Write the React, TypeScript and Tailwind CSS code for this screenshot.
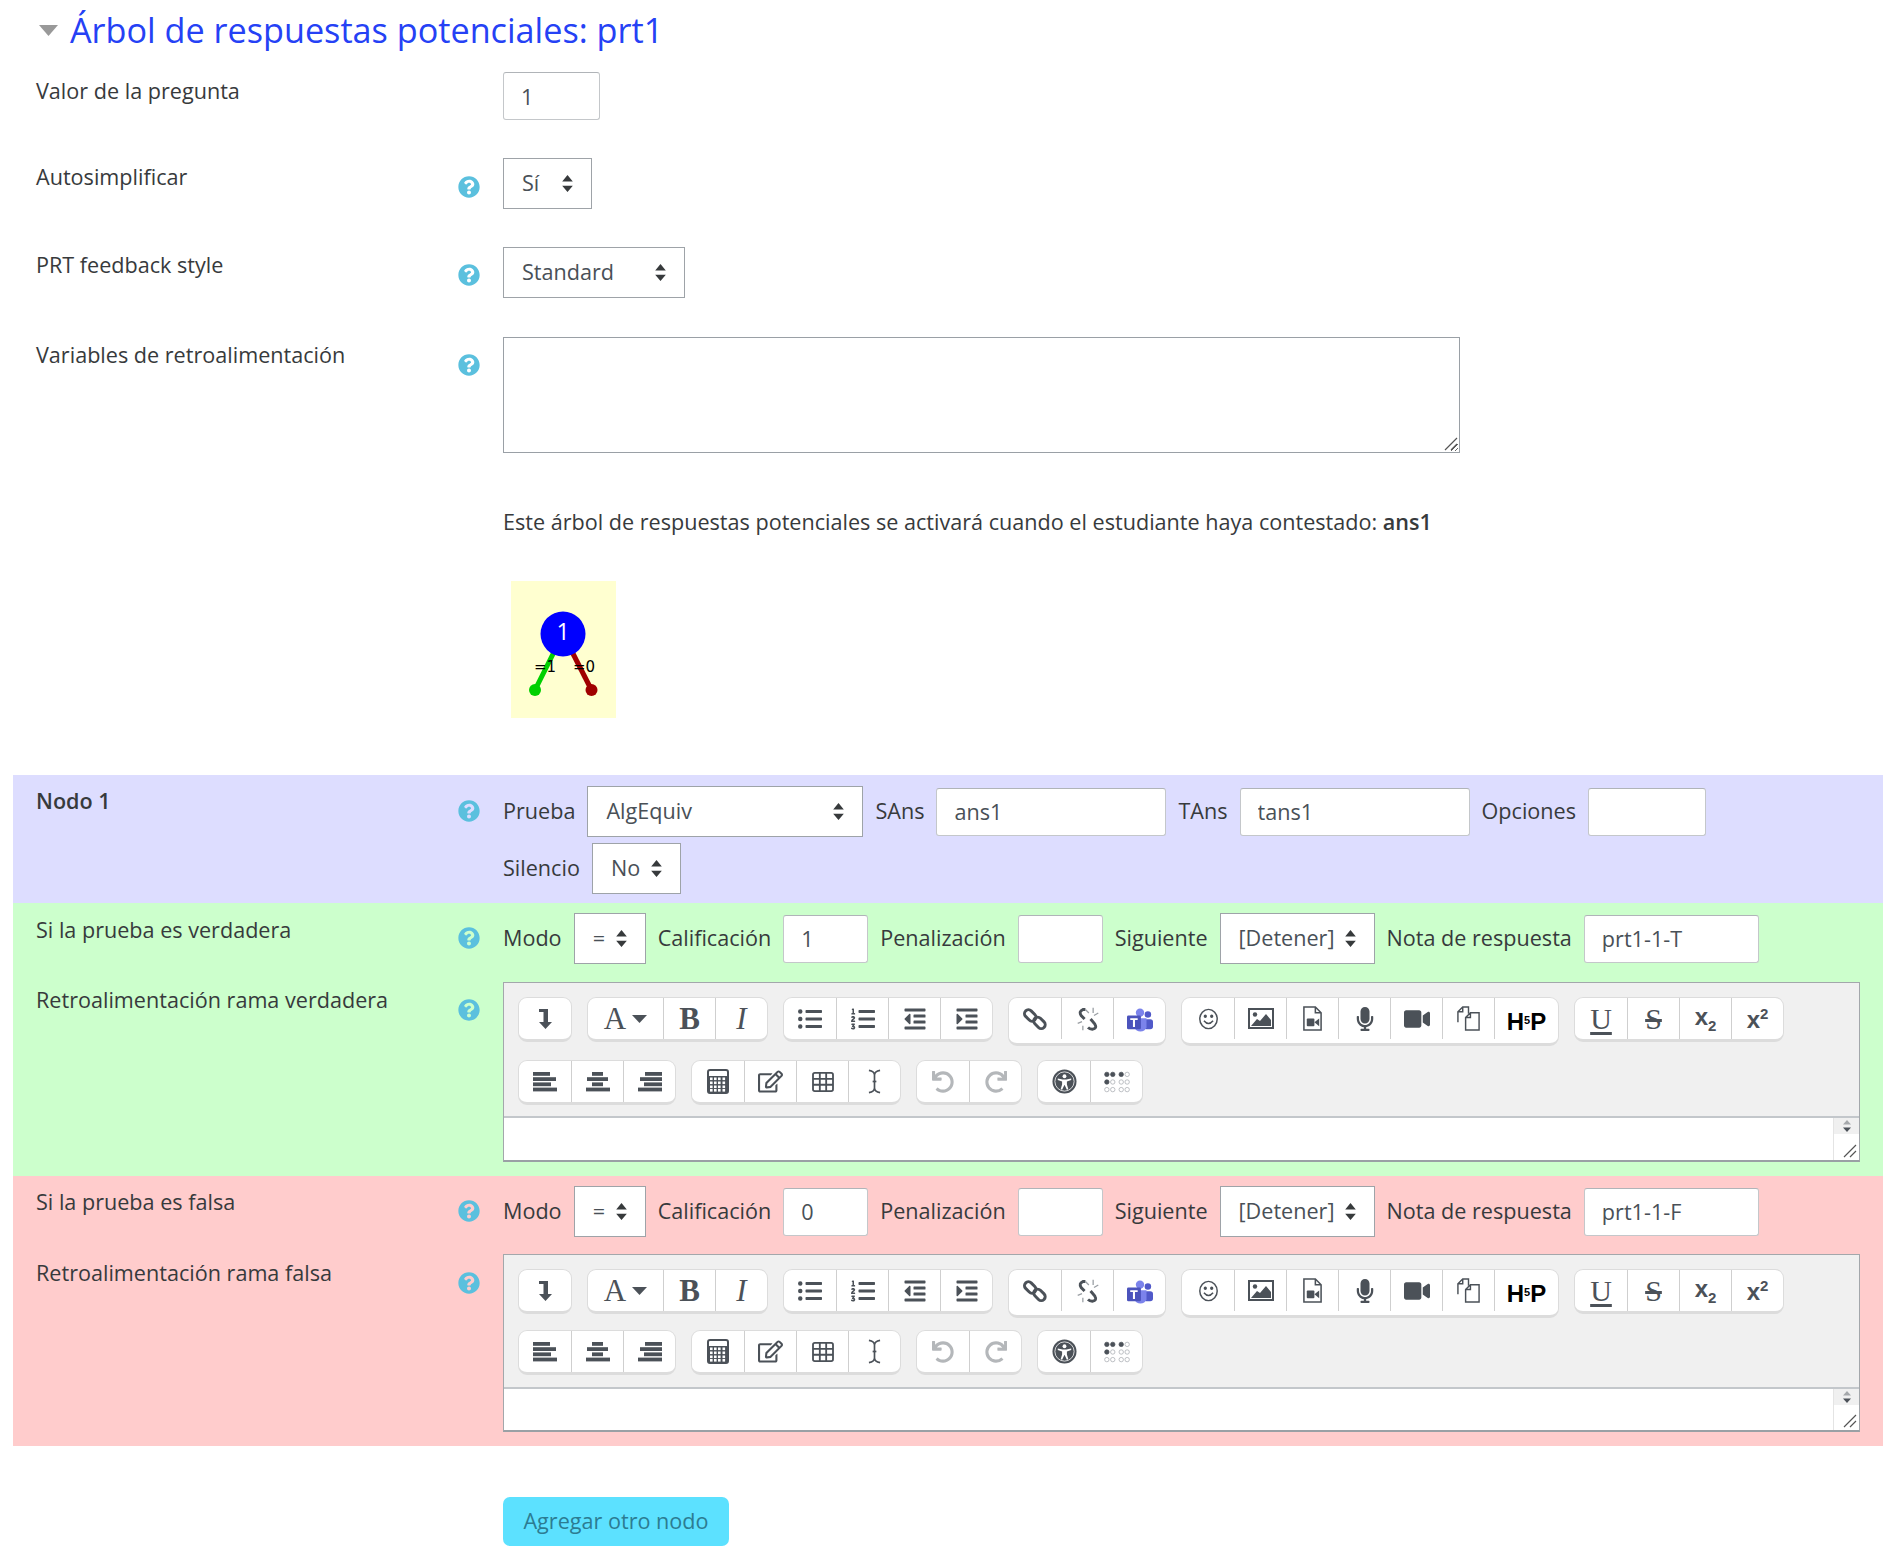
import { ReactNode } from 'react'
import { FaQuestionCircle, FaListUl, FaListOl, FaOutdent, FaIndent, FaMicrophone, FaVideo, FaRegEdit, FaUndo, FaRedo } from 'react-icons/fa'

const serif = 'font-["Liberation_Serif",serif]'

function Help({ top }: { top: string }) {
  return (
    <div className={`w-[45px] shrink-0 ${top}`}>
      <FaQuestionCircle className="text-[#5bc0de]" size={22} />
    </div>
  )
}

function Label({ text, top, bold }: { text: string; top: string; bold?: boolean }) {
  return <div className={`w-[422px] shrink-0 leading-[33px] ${top} ${bold ? 'font-semibold' : ''}`}>{text}</div>
}

function Arrows() {
  return (
    <svg width="11" height="17" viewBox="0 0 10 16" className="block">
      <path d="M5 0 L10 6 H0 Z M5 16 L0 10 H10 Z" fill="#373a3c" />
    </svg>
  )
}

function Select({ value, width }: { value: string; width: string }) {
  return (
    <div className={`relative shrink-0 h-[51px] ${width}`}>
      <select
        defaultValue={value}
        className="appearance-none w-full h-full bg-white border border-[#9ea3a8] rounded-none pl-[18px] text-[21.6px] text-[#495057] outline-none"
      >
        <option>{value}</option>
      </select>
      <div className="absolute right-[19px] top-[17px] pointer-events-none">
        <Arrows />
      </div>
    </div>
  )
}

function Input({ value = '', width }: { value?: string; width: string }) {
  return (
    <input
      defaultValue={value}
      className={`shrink-0 h-[48px] bg-white border border-[#c4c7ca] border-t-[#b0b4b8] rounded-[3px] px-[17px] text-[21.6px] text-[#495057] outline-none ${width}`}
    />
  )
}

function Tool({ children, first, width }: { children: ReactNode; first?: boolean; width?: string }) {
  return (
    <div className={`${width ?? 'w-[52px]'} h-[41px] flex items-center justify-center text-[#4b5158] ${first ? '' : 'border-l border-[#cfcfcf]'}`}>
      {children}
    </div>
  )
}

function Group({ items, tall, widths }: { items: ReactNode[]; tall?: boolean; widths?: Record<number, string> }) {
  return (
    <div className={`flex bg-white border border-[#dcdcdc] border-b-[3px] rounded-[9px] ${tall ? 'pb-[4px]' : ''}`}>
      {items.map((it, i) => (
        <Tool key={i} first={i === 0} width={widths?.[i]}>
          {it}
        </Tool>
      ))}
    </div>
  )
}

const ink = '#4b5158'

const IconCollapse = (
  <svg width="15" height="22" viewBox="0 0 15 22"><path d="M1 1 H10 V14 H14 L7.5 21 L1 14 H5.5 V4 H1 Z" fill={ink} /></svg>
)
const IconLink = (
  <svg width="24" height="24" viewBox="0 0 26 26" fill="none" stroke={ink} strokeWidth="3.2">
    <rect x="1" y="5" width="14" height="8.5" rx="4.2" transform="rotate(45 8 9)" />
    <rect x="11" y="13" width="14" height="8.5" rx="4.2" transform="rotate(45 18 17)" />
  </svg>
)
const IconUnlink = (
  <svg width="24" height="26" viewBox="0 0 28 30" fill="none">
    <path d="M11 4 H8 Q3 6 6 11 L10 15 M17 15 L22 21 Q25 26 19 27 Q16 27 14 25" stroke={ink} strokeWidth="3.4" />
    <path d="M11 4 L15 8 M20 2 V8 M26 8 L21 11 M2 20 L7 18 M8 28 V23" stroke="#9a9fa4" strokeWidth="1.5" />
  </svg>
)
const IconTeams = (
  <svg width="26" height="26" viewBox="0 0 28 28" className="mt-[4px]">
    <circle cx="22.5" cy="7" r="3.5" fill="#5059c9" />
    <rect x="18" y="12" width="10" height="11" rx="3" fill="#5059c9" />
    <circle cx="14" cy="5" r="4.5" fill="#7b83eb" />
    <path d="M8 11 H21 V21 A7 7 0 0 1 8 21 Z" fill="#7b83eb" />
    <rect x="0" y="8" width="15" height="15" rx="1.5" fill="#4b53bc" />
    <path d="M3.5 11 H11.5 V13 H8.6 V20.5 H6.4 V13 H3.5 Z" fill="#fff" />
  </svg>
)
const IconSmile = (
  <svg width="21" height="22" viewBox="0 0 22 24" fill="none" stroke={ink} strokeWidth="1.6">
    <ellipse cx="11" cy="12" rx="9.5" ry="10.5" />
    <circle cx="7.5" cy="9" r="1" fill={ink} />
    <circle cx="14.5" cy="9" r="1" fill={ink} />
    <path d="M6 14 Q11 20 16 14" />
  </svg>
)
const IconImage = (
  <svg width="26" height="21" viewBox="0 0 26 21">
    <rect x="1" y="1" width="24" height="19" fill="none" stroke={ink} strokeWidth="2" />
    <circle cx="7" cy="6.5" r="2.2" fill={ink} />
    <path d="M3 18 L9 11 L12 13 L18 6 L23 12 V18 Z" fill={ink} />
  </svg>
)
const IconVideoFile = (
  <svg width="21" height="25" viewBox="0 0 22 26">
    <path d="M2 1 H14 L20 7 V25 H2 Z M14 1 V7 H20" fill="none" stroke={ink} strokeWidth="1.6" />
    <rect x="5" y="13" width="8" height="8" rx="1" fill={ink} />
    <path d="M13 17 L18 13 V21 Z" fill={ink} />
  </svg>
)
const IconPaste = (
  <svg width="25" height="27" viewBox="0 0 26 28" fill="none" stroke={ink} strokeWidth="1.5">
    <path d="M2 18 V7 L7 2 H13 V9" />
    <path d="M2 7 H7 V2" />
    <path d="M10 13 L15 8 H24 V26 H10 Z M10 13 H15 V8" fill="#fff" />
  </svg>
)
const IconH5p = (
  <span className='font-["Liberation_Sans",sans-serif] font-bold text-black text-[24px] leading-none flex items-center mt-[6px]'>
    H<span className="text-[11px] leading-none mb-[3px]">5</span>P
  </span>
)
const alignBars = (rows: [number, number][]) => (
  <svg width="24" height="22" viewBox="0 0 24 22" fill={ink}>
    {rows.map(([x, w], i) => (
      <rect key={i} x={x} y={1 + i * 5.2} width={w} height="3.8" />
    ))}
  </svg>
)
const IconCalc = (
  <svg width="22" height="25" viewBox="0 0 22 25">
    <rect x="1" y="1" width="20" height="23" rx="2" fill="none" stroke={ink} strokeWidth="2" />
    <rect x="1" y="7" width="20" height="17" fill={ink} />
    {[8.5, 12.5, 16.5, 20].flatMap(y =>
      [3, 7, 11, 15.5].map(x => <rect key={`${x}-${y}`} x={x} y={y} width="2.6" height="2.6" fill="#fff" />)
    )}
  </svg>
)
const IconTable = (
  <svg width="22" height="20" viewBox="0 0 24 22" fill="none" stroke={ink} strokeWidth="2">
    <rect x="1" y="1" width="22" height="20" rx="2" />
    <path d="M1 7.5 H23 M1 14 H23 M8.5 1 V21 M15.5 1 V21" />
  </svg>
)
const IconCursor = (
  <svg width="13" height="25" viewBox="0 0 14 26" fill="none" stroke={ink} strokeWidth="1.8">
    <path d="M1 1 Q7 2 7 6 V20 Q7 24 1 25 M13 1 Q7 2 7 6 M13 25 Q7 24 7 20" />
    <path d="M5 13 H9" />
  </svg>
)
const IconAccess = (
  <svg width="25" height="25" viewBox="0 0 26 26">
    <circle cx="13" cy="13" r="12.5" fill={ink} />
    <circle cx="13" cy="13" r="10" fill="none" stroke="#fff" strokeWidth="0.8" />
    <circle cx="13" cy="7.5" r="2" fill="#fff" />
    <path d="M6 10 L11 11 H15 L20 10 L20 11.5 L15.5 13 V16 L17 21 L15.5 21.5 L13 16.5 L10.5 21.5 L9 21 L10.5 16 V13 L6 11.5 Z" fill="#fff" />
  </svg>
)
const IconBraille = (
  <svg width="30" height="22" viewBox="0 0 30 26" strokeWidth="0.9">
    {[
      [3, 4, 1], [10, 4, 1], [3, 13, 1], [10, 13, 0], [3, 22, 0], [10, 22, 0],
      [20, 4, 1], [27, 4, 0], [20, 13, 0], [27, 13, 0], [20, 22, 0], [27, 22, 0],
    ].map(([x, y, on]) => (
      <circle key={`${x}-${y}`} cx={x} cy={y} r="2.6" fill={on ? ink : 'none'} stroke={on ? ink : '#a9adb2'} />
    ))}
  </svg>
)

function Editor({ compact }: { compact?: boolean }) {
  const letter = `${serif} text-[31px] leading-none`
  return (
    <div className="w-[1357px] border border-[#a3a7ab] border-b-2 border-b-[#9aa0a5]">
      <div className={`${compact ? 'h-[134px] gap-y-[12px]' : 'h-[135px] gap-y-[14px]'} bg-[#f0f0f0] border-b-2 border-[#c3c7cb] pl-[14px] pt-[14px] flex flex-wrap content-start items-start gap-x-[15px]`}>
        <Group items={[IconCollapse]} />
        <Group
          widths={{ 0: 'w-[75px]' }}
          items={[
            <span className={`${letter} flex items-center gap-[6px]`}>
              A
              <svg width="15" height="8" viewBox="0 0 15 8"><path d="M0 0 H15 L7.5 8 Z" fill={ink} /></svg>
            </span>,
            <span className={`${letter} font-bold`}>B</span>,
            <span className={`${letter} italic`}>I</span>,
          ]}
        />
        <Group
          items={[<FaListUl size={24} />, <FaListOl size={24} />, <FaOutdent size={24} />, <FaIndent size={24} />]}
        />
        <Group tall items={[IconLink, IconUnlink, IconTeams]} />
        <Group
          tall
          widths={{ 6: 'w-[64px]' }}
          items={[IconSmile, IconImage, IconVideoFile, <FaMicrophone size={24} />, <FaVideo size={26} />, IconPaste, IconH5p]}
        />
        <Group
          items={[
            <span className={`${serif} text-[30px] leading-[28px] underline underline-offset-[3px]`}>U</span>,
            <span className={`${serif} text-[30px] leading-none line-through`}>S</span>,
            <span className='font-["Liberation_Sans",sans-serif] font-bold text-[24px] leading-none'>x<span className="text-[15px] align-sub">2</span></span>,
            <span className='font-["Liberation_Sans",sans-serif] font-bold text-[24px] leading-none'>x<span className="text-[15px] align-super">2</span></span>,
          ]}
        />
        <Group
          items={[
            alignBars([[0, 17], [0, 23], [0, 18], [0, 24]]),
            alignBars([[6, 11], [1, 21], [6, 11], [0, 24]]),
            alignBars([[7, 17], [2, 22], [6, 18], [0, 24]]),
          ]}
        />
        <Group items={[IconCalc, <FaRegEdit size={25} />, IconTable, IconCursor]} />
        <Group items={[<FaUndo size={22} className="text-[#b4b7ba]" />, <FaRedo size={22} className="text-[#b4b7ba]" />]} />
        <Group items={[IconAccess, IconBraille]} />
      </div>
      <div className={`${compact ? 'h-[41px]' : 'h-[42px]'} bg-white flex justify-end`}>
        <div className="w-[26px] border-l border-[#e4e4e4] flex flex-col">
          <div className="h-[16px] bg-[#f0f0f0] flex items-center justify-center">
            <svg width="8" height="12" viewBox="0 0 8 12"><path d="M4 0 L8 4.5 H0 Z" fill="#a5a8ab" /><path d="M4 12 L0 7.5 H8 Z" fill="#4b5158" /></svg>
          </div>
          <div className="flex-1 flex items-end justify-end pr-[2px] pb-[2px]">
            <svg width="14" height="14" viewBox="0 0 14 14" stroke="#555" strokeWidth="1.2"><path d="M1 13 L13 1 M7 13 L13 7" /></svg>
          </div>
        </div>
      </div>
    </div>
  )
}

function Branch({ bg, title, feedback, score, note, last }: { bg: string; title: string; feedback: string; score: string; note: string; last?: boolean }) {
  return (
    <div className={`${bg} pt-[10px] pl-[23px] pb-[14px]`}>
      <div className={`flex ${last ? 'mb-[17px]' : 'mb-[18px]'}`}>
        <Label text={title} top={last ? '-mt-[1px]' : ''} />
        <Help top="pt-[14px]" />
        <div className="flex items-center gap-x-[12px]">
          <span>Modo</span>
          <Select value="=" width="w-[72px]" />
          <span>Calificación</span>
          <Input value={score} width="w-[85px]" />
          <span>Penalización</span>
          <Input width="w-[85px]" />
          <span>Siguiente</span>
          <Select value="[Detener]" width="w-[155px]" />
          <span>Nota de respuesta</span>
          <Input value={note} width="w-[175px]" />
        </div>
      </div>
      <div className="flex">
        <Label text={feedback} top={last ? 'pt-[2px]' : 'pt-[1px]'} />
        <Help top={last ? 'pt-[18px]' : 'pt-[17px]'} />
        <Editor compact={last} />
      </div>
    </div>
  )
}

function Diagram() {
  return (
    <svg width="105" height="137" viewBox="0 0 105 137" className="ml-[8px] bg-[#ffffd0] block">
      <line x1="52" y1="53" x2="24" y2="109" stroke="#00d000" strokeWidth="5" />
      <line x1="52" y1="53" x2="80.5" y2="109" stroke="#a00000" strokeWidth="5" />
      <circle cx="24" cy="109" r="6" fill="#00d000" />
      <circle cx="80.5" cy="109" r="6" fill="#a00000" />
      <circle cx="52" cy="53" r="22.5" fill="#0000ff" />
      <text x="52" y="59" textAnchor="middle" fill="#fff" fontSize="23" fontFamily="Open Sans, sans-serif">1</text>
      <text x="23" y="91" fontSize="15" fill="#000" fontFamily="DejaVu Sans, sans-serif">=1</text>
      <text x="62" y="91" fontSize="15" fill="#000" fontFamily="DejaVu Sans, sans-serif">=0</text>
    </svg>
  )
}

export default function App() {
  return (
    <div className='font-["Open_Sans",sans-serif] text-[21.6px] text-[#373a3c] bg-white min-h-[1559px] w-[1896px] overflow-hidden'>
      <div className="flex items-center h-[60px] pl-[39px]">
        <svg width="19" height="11" viewBox="0 0 19 11" className="mr-[12px]"><path d="M0 0 H19 L9.5 11 Z" fill="#999" /></svg>
        <h3 className="text-[34.2px] text-[#2541f5] leading-none">Árbol de respuestas potenciales: prt1</h3>
      </div>
      <div className="pl-[36px] mt-[12px]">
        <div className="flex mb-[38px]">
          <Label text="Valor de la pregunta" top="pt-[2px]" />
          <div className="w-[45px] shrink-0" />
          <Input value="1" width="w-[97px]" />
        </div>
        <div className="flex mb-[38px]">
          <Label text="Autosimplificar" top="pt-[2px]" />
          <Help top="pt-[18px]" />
          <Select value="Sí" width="w-[89px]" />
        </div>
        <div className="flex mb-[39px]">
          <Label text="PRT feedback style" top="pt-[1px]" />
          <Help top="pt-[17px]" />
          <Select value="Standard" width="w-[182px]" />
        </div>
        <div className="flex mb-[52px]">
          <Label text="Variables de retroalimentación" top="pt-[1px]" />
          <Help top="pt-[17px]" />
          <div className="relative w-[957px] h-[116px]">
            <textarea className="w-full h-full bg-white border border-[#9aa0a6] outline-none block" />
            <svg width="14" height="14" viewBox="0 0 14 14" stroke="#555" strokeWidth="1.2" className="absolute right-[2px] bottom-[2px] pointer-events-none">
              <path d="M1 13 L13 1 M7 13 L13 7" />
            </svg>
          </div>
        </div>
        <div className="pl-[467px]">
          <p className="leading-[33px] mb-[43px]">
            Este árbol de respuestas potenciales se activará cuando el estudiante haya contestado: <span className="font-semibold">ans1</span>
          </p>
          <Diagram />
        </div>
      </div>
      <div className="mx-[13px] mt-[57px]">
        <div className="bg-[#ddddff] pt-[11px] pb-[9px] pl-[23px] flex">
          <Label text="Nodo 1" top="-mt-[2px]" bold />
          <Help top="pt-[14px]" />
          <div className="flex flex-wrap items-center gap-x-[12px] gap-y-[6px] w-[1370px]">
            <span>Prueba</span>
            <Select value="AlgEquiv" width="w-[276px]" />
            <span>SAns</span>
            <Input value="ans1" width="w-[230px]" />
            <span>TAns</span>
            <Input value="tans1" width="w-[230px]" />
            <span>Opciones</span>
            <Input width="w-[118px]" />
            <div className="flex items-center gap-x-[12px]">
              <span>Silencio</span>
              <Select value="No" width="w-[89px]" />
            </div>
          </div>
        </div>
        <Branch
          bg="bg-[#ccffcc]"
          title="Si la prueba es verdadera"
          feedback="Retroalimentación rama verdadera"
          score="1"
          note="prt1-1-T"
        />
        <Branch
          bg="bg-[#ffcccc]"
          title="Si la prueba es falsa"
          feedback="Retroalimentación rama falsa"
          score="0"
          note="prt1-1-F"
          last
        />
      </div>
      <div className="pl-[503px] mt-[51px]">
        <button className="h-[49px] w-[226px] bg-[#5ce1ff] rounded-[7px] text-[#2c7c92] text-[21.6px]">Agregar otro nodo</button>
      </div>
    </div>
  )
}
